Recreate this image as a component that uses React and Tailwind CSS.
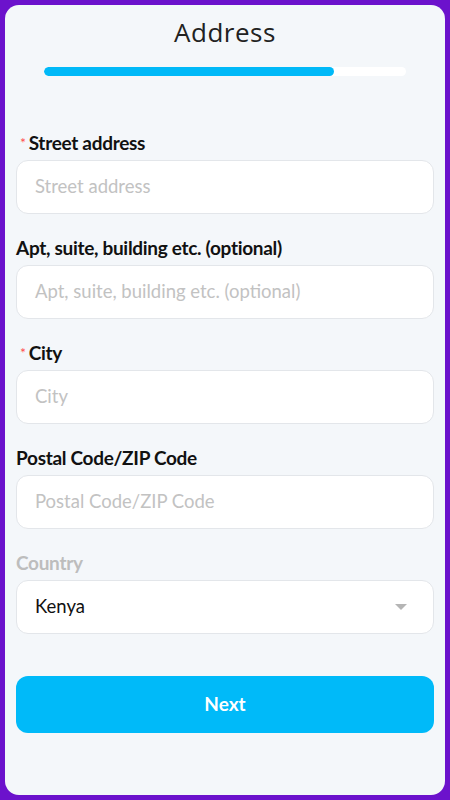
export default function App() {
  const fields = [
    { label: "Street address", req: true },
    { label: "Apt, suite, building etc. (optional)" },
    { label: "City", req: true },
    { label: "Postal Code/ZIP Code" },
  ];
  return (
    <div className="w-[450px] h-[800px] bg-[#6c12cc] p-[5px]" style={{ fontFamily: "Lato, 'Open Sans', sans-serif" }}>
      <div className="h-full bg-[#f4f7fa] rounded-[14px] px-[11px] flex flex-col">
        <h1 className="text-center text-[26px] leading-[32px] mt-[11px] text-[#222]" style={{ fontFamily: "'Open Sans', sans-serif", letterSpacing: "0.5px" }}>Address</h1>
        <div className="mx-[28px] mt-[19px] h-[9px] rounded-full bg-white overflow-hidden">
          <div className="h-full bg-[#00b9f8] rounded-full" style={{ width: "80%" }} />
        </div>
        <div className="mt-[55px] flex flex-col gap-[22px]">
          {fields.map((f) => (
            <div key={f.label} className="flex flex-col gap-[5px]">
              <div className="text-[19px] leading-[24px] font-bold text-[#111] tracking-[-0.3px]">
                {f.req && <span className="text-[#ff4d4f] text-[14px] font-normal mr-[3px] ml-[4px] align-top">*</span>}
                {f.label}
              </div>
              <div className="h-[54px] bg-white border border-[#e3e6ea] rounded-[12px] flex items-center px-[18px] text-[18.5px] text-[#c2c2c2]">
                {f.label}
              </div>
            </div>
          ))}
          <div className="flex flex-col gap-[5px]">
            <div className="text-[19px] leading-[24px] font-bold text-[#bdbdbd] tracking-[-0.3px]">Country</div>
            <div className="h-[54px] bg-white border border-[#e3e6ea] rounded-[12px] flex items-center justify-between px-[18px] text-[18.5px] text-[#111]">
              Kenya
              <svg width="12" height="7" viewBox="0 0 12 7" className="mr-[8px]"><path d="M0 0h12L6 6z" fill="#b5b5b5" /></svg>
            </div>
          </div>
        </div>
        <button className="mt-[42px] h-[57px] rounded-[12px] bg-[#00baf9] text-white text-[19px] font-bold">Next</button>
      </div>
    </div>
  );
}
